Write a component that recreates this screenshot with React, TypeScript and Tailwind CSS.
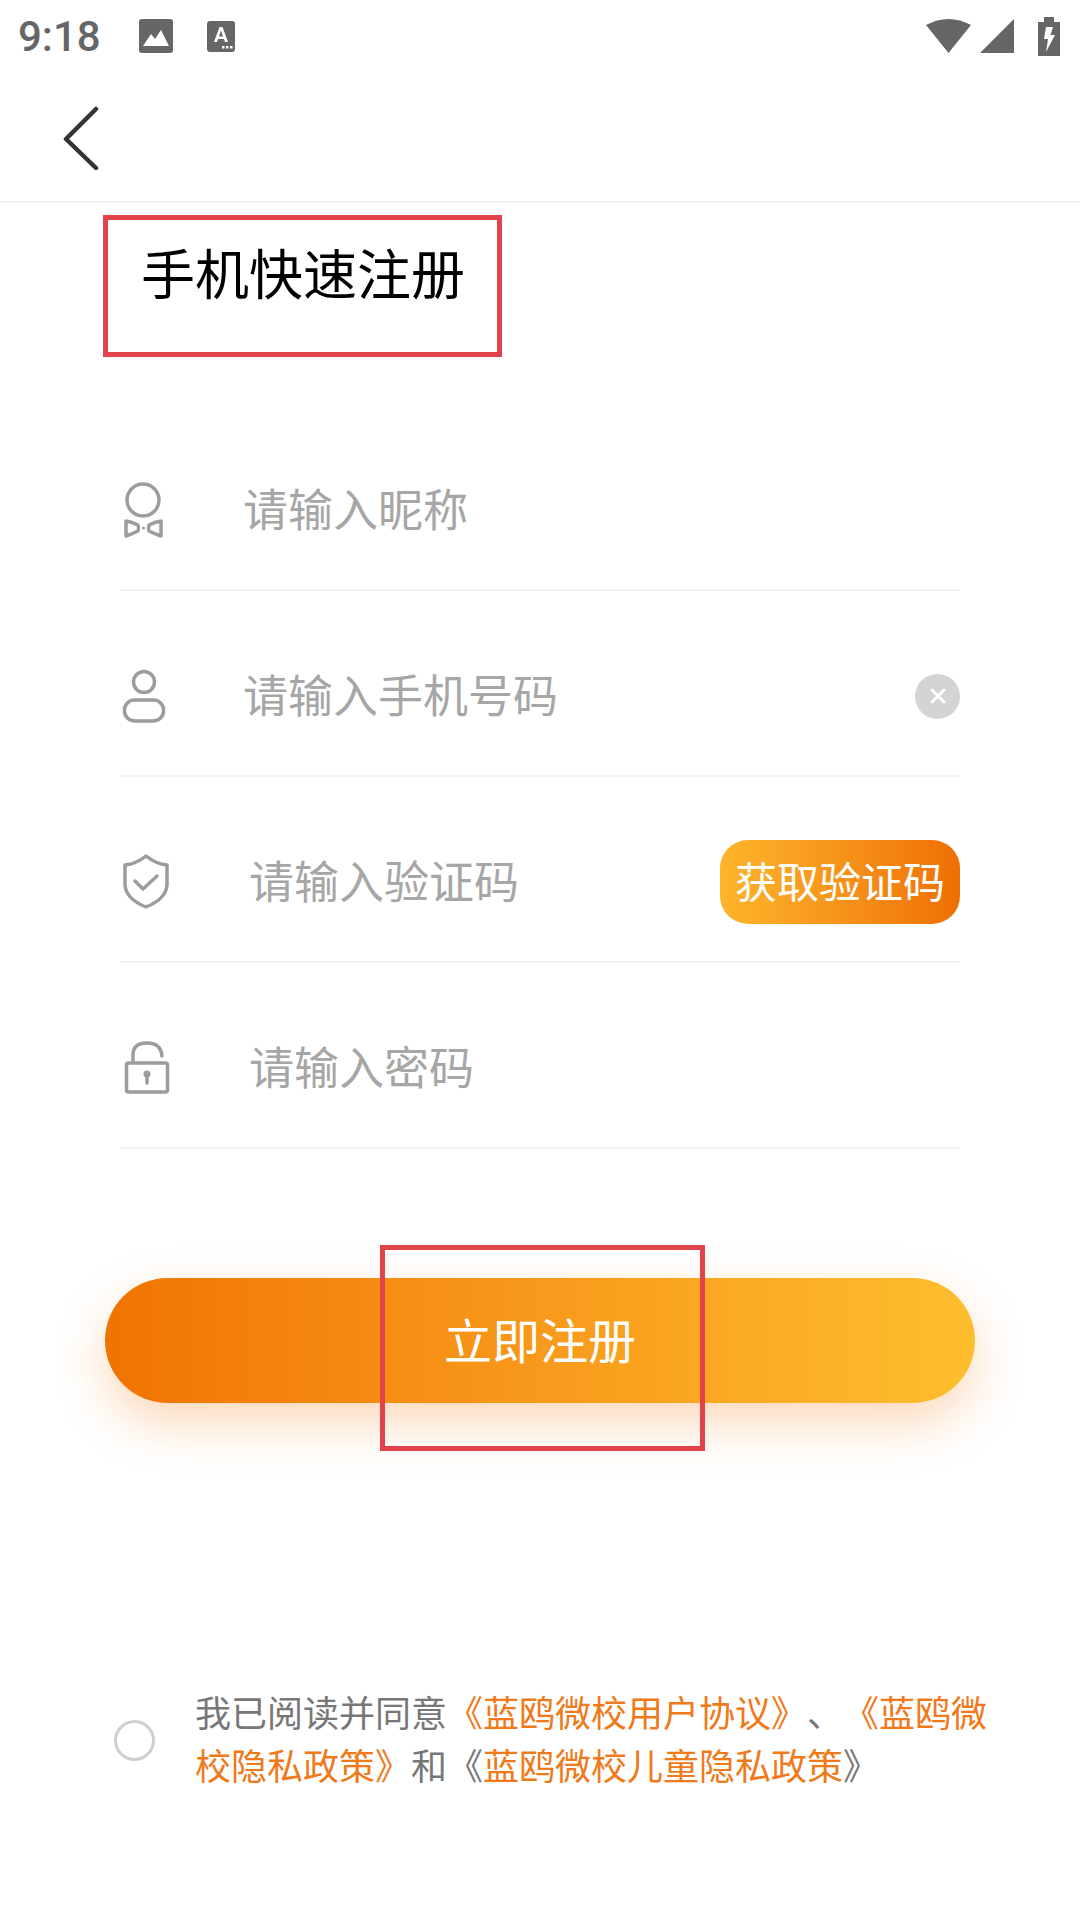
const cjk = '[font-family:"Noto_Sans_CJK_SC","Noto_Sans",sans-serif]'

function Field({ icon, placeholder, textLeft, right }: { icon: React.ReactNode; placeholder: string; textLeft: string; right?: React.ReactNode }) {
  return (
    <div className="flex h-[186px] items-center border-b-2 border-[#f2f2f2] pt-[26px]">
      <div className={textLeft}>{icon}</div>
      <span className="mb-[5px] flex-1 text-[45px] text-[#a6a6a6]">{placeholder}</span>
      {right}
    </div>
  )
}

function Frame({ children }: { children: React.ReactNode }) {
  return (
    <svg className="-mt-[2px]" width="60" height="60" viewBox="0 0 60 60" fill="none" stroke="#9c9c9c" strokeWidth="3.5" strokeLinecap="round" strokeLinejoin="round">
      {children}
    </svg>
  )
}

export default function App() {
  return (
    <main className={`h-[1920px] w-[1080px] overflow-hidden bg-white ${cjk}`}>
      {/* status bar */}
      <div className="flex h-[72px] items-center">
        <span className="ml-[18px] text-[42px] font-medium text-[#666] [font-family:Roboto,sans-serif]">9:18</span>
        <svg className="ml-[38px]" width="34" height="34" viewBox="0 0 34 34">
          <rect width="34" height="34" rx="3" fill="#666" />
          <path d="M4 27 L12 15 L16 20 L22 11 L30 27 Z" fill="#fff" />
        </svg>
        <svg className="ml-[34px]" width="28" height="31" viewBox="0 0 28 31">
          <rect width="28" height="31" rx="3" fill="#666" />
          <path d="M7 21 L12.5 6 H15.5 L21 21 H18 L17 18 H11 L10 21 Z M12 15.5 H16 L14 9.5 Z" fill="#fff" fillRule="evenodd" />
          <rect x="15" y="25" width="2.5" height="2.5" fill="#fff" />
          <rect x="19" y="25" width="2.5" height="2.5" fill="#fff" />
          <rect x="23" y="25" width="2.5" height="2.5" fill="#fff" />
        </svg>
        <svg className="-mt-[2px] ml-auto" width="45" height="36" viewBox="0 0 45 36">
          <path d="M0 8 Q22.5 -4 45 8 L22.5 36 Z" fill="#666" />
        </svg>
        <svg className="ml-[9px]" width="34" height="34" viewBox="0 0 34 34">
          <path d="M34 0 V34 H0 Z" fill="#666" />
        </svg>
        <svg className="ml-[24px] mr-[20px]" width="22" height="39" viewBox="0 0 22 39">
          <path d="M6 0 H16 V5 H22 V39 H0 V5 H6 Z" fill="#666" />
          <path d="M8 10 H15 L12.5 18 H17 L8 35 L10 22 H6 Z" fill="#fff" />
        </svg>
      </div>

      {/* header */}
      <div className="flex h-[131px] items-center border-b-2 border-[#f1f1f1] pl-[63px]">
        <svg className="mt-[3px]" width="36" height="64" viewBox="0 0 36 64" fill="none" stroke="#333" strokeWidth="4.5" strokeLinecap="round" strokeLinejoin="round">
          <path d="M33 3 L3 33 L33 62" />
        </svg>
      </div>

      {/* title, with the annotation box */}
      <div className="ml-[103px] mt-[12px] h-[142px] w-[399px] border-[5px] border-[#e2434b] pl-[33px] pt-[14px] text-[54px] leading-[76px] text-black">
        手机快速注册
      </div>

      <div className="mx-[120px] mt-[48px]">
        <Field
          textLeft="w-[123px]"
          placeholder="请输入昵称"
          icon={
            <Frame>
              <circle cx="23" cy="21" r="16" />
              <path d="M6 42 Q12 43 18 46 Q19 49 18 52 Q12 55 6 57 Z" />
              <path d="M41 42 Q35 43 29 46 Q28 49 29 52 Q35 55 41 57 Z" />
              <circle cx="23.5" cy="49" r="1.6" fill="#9c9c9c" stroke="none" />
            </Frame>
          }
        />
        <Field
          textLeft="w-[123px]"
          placeholder="请输入手机号码"
          icon={
            <Frame>
              <circle cx="24" cy="17" r="10.5" />
              <rect x="4.5" y="35" width="39" height="21" rx="10" />
            </Frame>
          }
          right={
            <div className="flex h-[45px] w-[45px] items-center justify-center rounded-full bg-[#d4d4d4]">
              <svg width="16" height="16" viewBox="0 0 16 16" fill="none" stroke="#fff" strokeWidth="3" strokeLinecap="round">
                <path d="M2 2 L14 14 M14 2 L2 14" />
              </svg>
            </div>
          }
        />
        <Field
          textLeft="w-[129px]"
          placeholder="请输入验证码"
          icon={
            <Frame>
              <path d="M26 5 Q36 13 47 14 V34 Q46 48 26 56 Q6 48 5 34 V14 Q16 13 26 5 Z" />
              <path d="M15 30 L23 38 L37 25" />
            </Frame>
          }
          right={
            <button className="h-[84px] w-[240px] rounded-[28px] bg-gradient-to-r from-[#fdb52b] to-[#ee6f04] pb-[6px] text-[42px] text-white">
              获取验证码
            </button>
          }
        />
        <Field
          textLeft="w-[129px]"
          placeholder="请输入密码"
          icon={
            <Frame>
              <rect x="6.5" y="26" width="41" height="29" rx="2" />
              <path d="M13 25 V18 Q13 6 27 6 Q41 6 42 19" />
              <circle cx="27" cy="37" r="1.8" fill="#9c9c9c" />
              <path d="M27 38 V46" />
            </Frame>
          }
        />
      </div>

      {/* submit, with the annotation box over it */}
      <div className="relative mx-[105px] mt-[129px]">
        <button className="h-[125px] w-full rounded-full bg-gradient-to-r from-[#f07300] to-[#fdbe2e] pb-[6px] text-[48px] text-white shadow-[0_20px_50px_rgba(240,115,0,0.28)]">
          立即注册
        </button>
        <div className="absolute left-[275px] top-[-33px] h-[206px] w-[325px] border-[5px] border-[#e2434b]" />
      </div>

      {/* agreement */}
      <div className="ml-[114px] mt-[282px] flex items-center">
        <div className="h-[41px] w-[41px] rounded-full border-[3px] border-[#cfcfcf]" />
        <p className="mb-[4px] ml-[40px] w-[800px] text-[36px] leading-[53px] text-[#777] [text-spacing-trim:space-all]">
          我已阅读并同意<span className="text-[#f0791a]">《蓝鸥微校用户协议》</span>、<span className="text-[#f0791a]">《蓝鸥微校隐私政策》</span>和《<span className="text-[#f0791a]">蓝鸥微校儿童隐私政策</span>》
        </p>
      </div>
    </main>
  )
}
